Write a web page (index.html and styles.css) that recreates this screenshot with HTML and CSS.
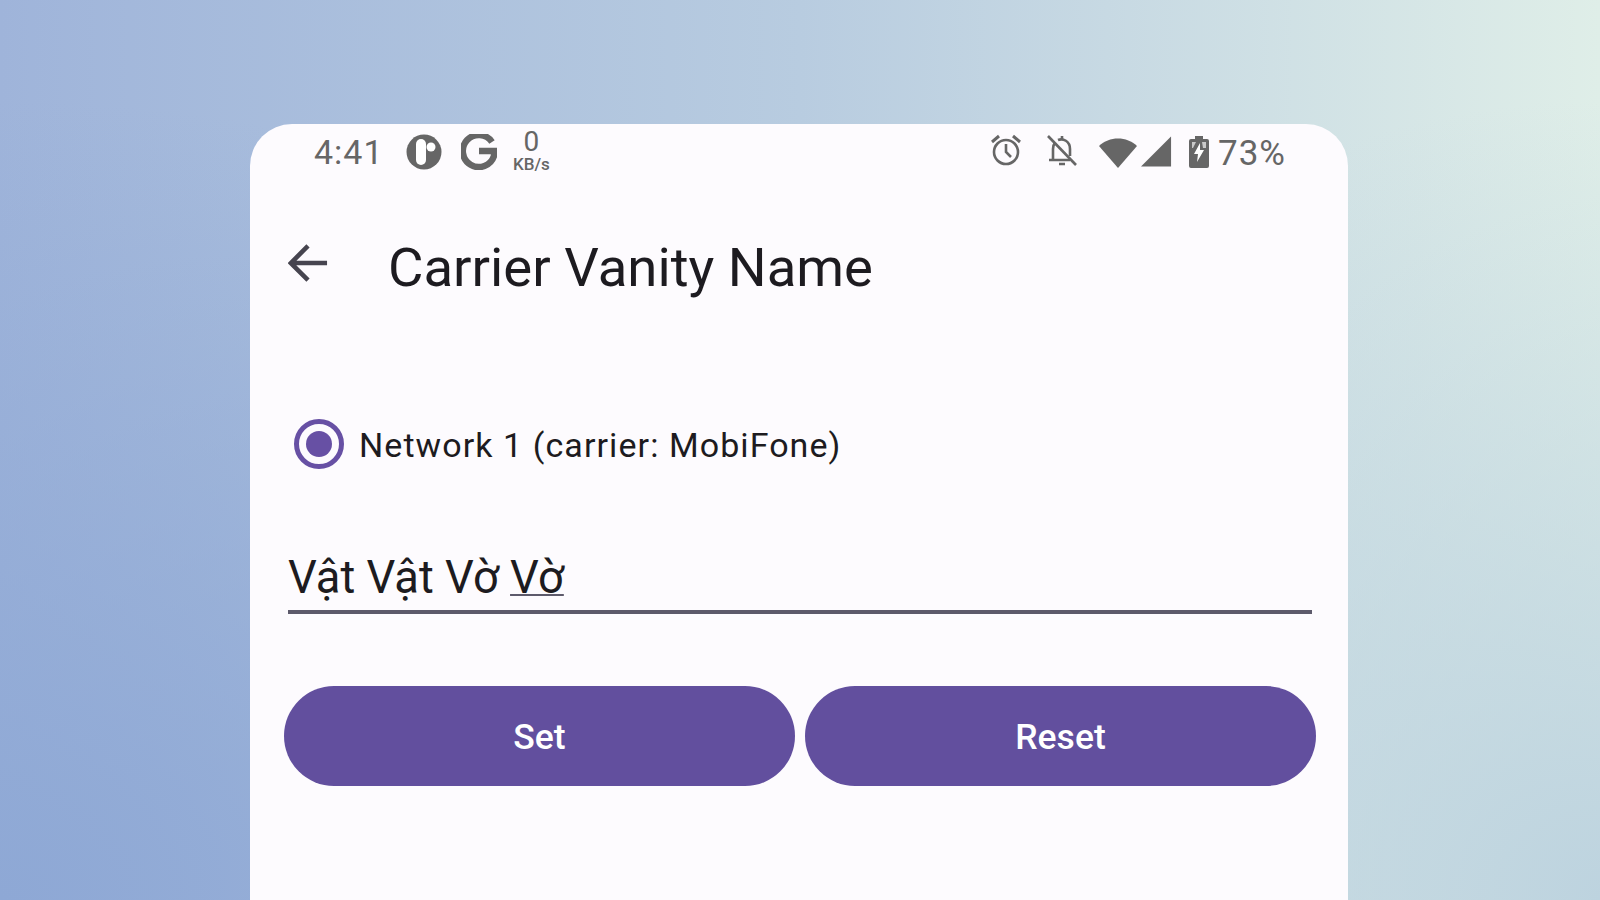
FILE: index.html
```html
<!DOCTYPE html>
<html lang="vi">
<head>
    <meta charset="UTF-8">
    <meta name="viewport" content="width=device-width, initial-scale=1.0">
    <title>Carrier Vanity Name</title>
    <link rel="stylesheet" href="styles.css">
</head>
<body>
    <div class="phone">
        <div class="status-bar">
            <div class="status-left">
                <span class="clock">4:41</span>
                <svg class="icon-p" width="36" height="36" viewBox="0 0 36 36">
                    <circle cx="18" cy="18" r="17.5" fill="#666"/>
                    <rect x="10" y="5" width="10" height="26" rx="5" fill="#fff"/>
                    <circle cx="25" cy="13" r="4.5" fill="#fff"/>
                </svg>
                <svg class="icon-g" width="36" height="36" viewBox="0 0 36 36">
                    <path d="M31 8 A 16 16 0 1 0 33 22 L 33 17 L 18 17" fill="none" stroke="#666" stroke-width="6.5"/>
                </svg>
                <div class="speed">
                    <span class="speed-num">0</span>
                    <span class="speed-unit">KB/s</span>
                </div>
            </div>
            <div class="status-right">
                <svg class="icon-alarm" width="34" height="34" viewBox="0 0 34 34" fill="none" stroke="#666" stroke-width="2.6">
                    <circle cx="17" cy="19" r="12"/>
                    <path d="M17 11 V19 L22 24"/>
                    <path d="M3 9 L10 3 M31 9 L24 3" stroke-width="3"/>
                </svg>
                <svg class="icon-bell" width="34" height="34" viewBox="0 0 34 34" fill="none" stroke="#666" stroke-width="2.6">
                    <path d="M4 27 H25 M8 27 V16 C8 13 9 11 10 10 M13 7 C18 5 25 8 25 16 V23"/>
                    <path d="M14 31 H20 M17 3 V6"/>
                    <path d="M3 3 L31 32"/>
                </svg>
                <svg class="icon-wifi" width="38" height="32" viewBox="0 0 38 32">
                    <path d="M0 10 C10 0 28 0 38 10 L19 32 Z" fill="#666"/>
                </svg>
                <svg class="icon-signal" width="31" height="32" viewBox="0 0 32 32">
                    <path d="M0 31 L31 0 V31 Z" fill="#666"/>
                </svg>
                <svg class="icon-battery" width="20" height="32" viewBox="0 0 20 32">
                    <path d="M6 0 H14 V3 H18 Q20 3 20 5 V30 Q20 32 18 32 H2 Q0 32 0 30 V5 Q0 3 2 3 H6 Z" fill="#666"/>
                    <path d="M11 7 L5 18 H9 L8 26 L15 14 H11 Z" fill="#fff"/>
                    <path d="M3 6 H7 L4 12 H3 Z M13 6 H17 V12 H14 Z" fill="#c9c9c9"/>
                </svg>
                <span class="battery-text">73%</span>
            </div>
        </div>

        <div class="toolbar">
            <svg class="back" width="40" height="40" viewBox="0 0 42 42" fill="none" stroke="#46444f" stroke-width="4.8">
                <path d="M3 20 H41 M21 2 L3 20 L21 38"/>
            </svg>
            <h1>Carrier Vanity Name</h1>
        </div>

        <div class="radio-row">
            <span class="radio"><span class="radio-dot"></span></span>
            <span class="radio-label">Network 1 (carrier: MobiFone)</span>
        </div>

        <div class="field">Vật Vật Vờ <u>Vờ</u></div>

        <div class="buttons">
            <button>Set</button>
            <button>Reset</button>
        </div>
    </div>
</body>
</html>
```

FILE: styles.css
```css
html, body { height: 100%; }
body {
    margin: 0;
    overflow: hidden;
    font-family: Roboto, "Noto Sans", sans-serif;
    background:
        radial-gradient(ellipse 1100px 800px at 0% 100%, #8ea8d5 0%, rgba(142,168,213,0) 100%),
        radial-gradient(ellipse 800px 800px at 100% 100%, #bdd3df 0%, rgba(189,211,223,0) 100%),
        linear-gradient(90deg, #9fb4da 0%, #b8cce0 50%, #dfeee8 100%);
}
.phone { width: 1098px; height: 776px; margin: 124px 0 0 250px; background: #fdfbfe; border-radius: 42px 42px 0 0; }

.status-bar { display: flex; justify-content: space-between; align-items: center; height: 56px; padding: 0 62px 0 64px; color: #666; }
.status-left, .status-right { display: flex; align-items: center; }
.clock { font-size: 34px; width: 92px; letter-spacing: 1px; }
.icon-g { margin-left: 19px; }
.speed { display: flex; flex-direction: column; align-items: center; margin: 0 0 4px 16px; font-weight: 500; }
.speed-num { margin-bottom: 2px; font-size: 28px; font-weight: 400; line-height: 26px; }
.speed-unit { font-size: 17px; line-height: 15px; }
.icon-alarm, .icon-bell { margin-bottom: 4px; }
.icon-bell { margin-left: 22px; }
.icon-wifi { margin-left: 20px; }
.icon-signal { margin-left: 4px; }
.icon-battery { margin-left: 17px; }
.battery-text { font-size: 35px; margin-left: 9px; padding-top: 2px; letter-spacing: 1px; }

.toolbar { display: flex; align-items: center; height: 70px; margin-top: 52px; padding-left: 38px; }
.back { margin-bottom: 6px; }
.toolbar h1 { margin: 0 0 0 60px; font-size: 54.5px; font-weight: 400; color: #1d1b20; }

.radio-row { display: flex; align-items: center; margin: 117px 0 0 44px; }
.radio { display: flex; align-items: center; justify-content: center; width: 50px; height: 50px; box-sizing: border-box; border: 5px solid #6750a4; border-radius: 50%; }
.radio-dot { width: 26px; height: 26px; flex: none; background: #6750a4; border-radius: 50%; }
.radio-label { margin-left: 15px; padding-top: 2px; font-size: 34px; letter-spacing: 1.07px; color: #1d1b20; }

.field { margin: 81px 36px 0 38px; padding-bottom: 4px; font-size: 45.3px; line-height: 56px; color: #1d1b20; border-bottom: 4px solid #5d5a6b; }
.field u { text-decoration-thickness: 2px; text-decoration-color: #5d5a6b; }

.buttons { display: flex; gap: 10px; margin: 72px 32px 0 34px; }
.buttons button { flex: 1; height: 100px; padding: 1px 0 0; border: none; border-radius: 50px; background: #624f9e; color: #fff; font-family: Roboto, sans-serif; font-size: 35.5px; font-weight: 500; }
```
